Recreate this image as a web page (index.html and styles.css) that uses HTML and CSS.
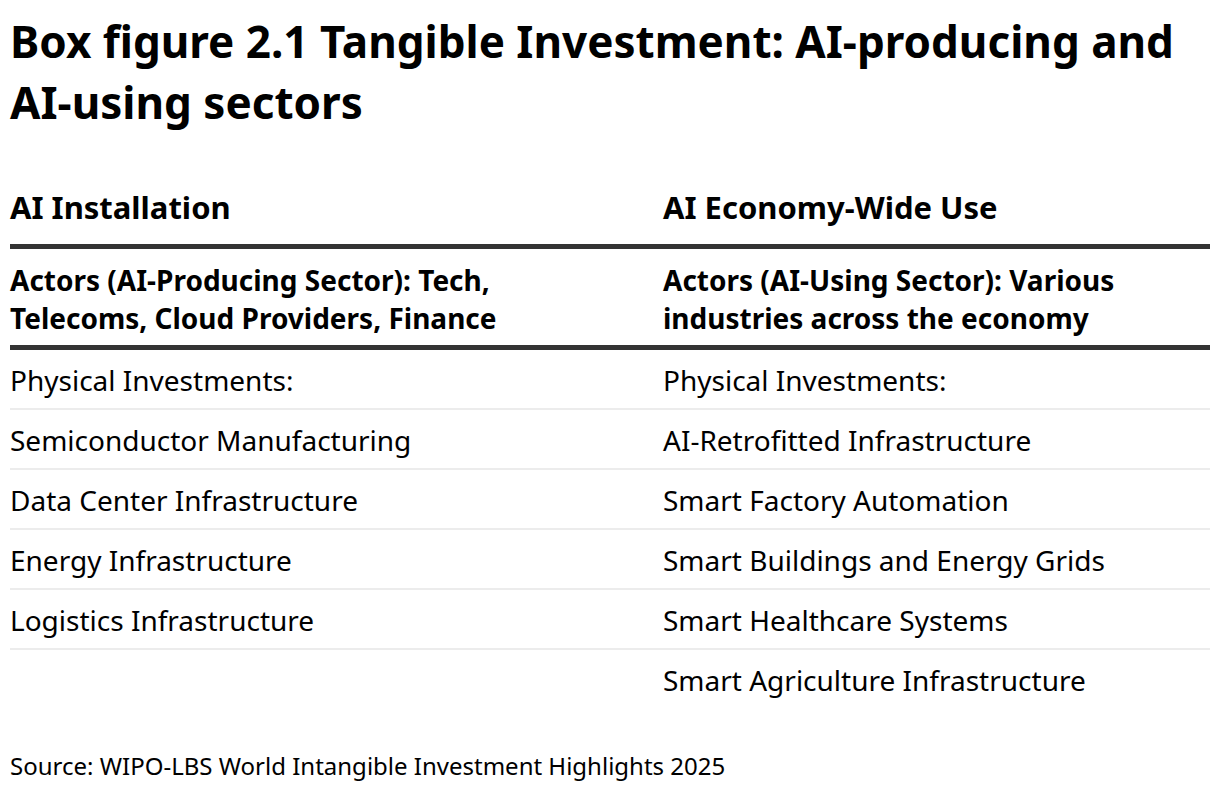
FILE: index.html
```html
<!DOCTYPE html>
<html lang="en">
<head>
<meta charset="utf-8">
<title>Box figure 2.1</title>
<link rel="stylesheet" href="styles.css">
</head>
<body>
<h1 class="title">Box figure 2.1 Tangible Investment: AI-producing and AI-using sectors</h1>
<div class="table">
  <div class="row head">
    <div class="cell">AI Installation</div>
    <div class="cell">AI Economy-Wide Use</div>
  </div>
  <div class="row actors">
    <div class="cell">Actors (AI-Producing Sector): Tech, Telecoms, Cloud Providers, Finance</div>
    <div class="cell">Actors (AI-Using Sector): Various industries across the economy</div>
  </div>
  <div class="row body">
    <div class="cell">Physical Investments:</div>
    <div class="cell">Physical Investments:</div>
  </div>
  <div class="row body">
    <div class="cell">Semiconductor Manufacturing</div>
    <div class="cell">AI-Retrofitted Infrastructure</div>
  </div>
  <div class="row body">
    <div class="cell">Data Center Infrastructure</div>
    <div class="cell">Smart Factory Automation</div>
  </div>
  <div class="row body">
    <div class="cell">Energy Infrastructure</div>
    <div class="cell">Smart Buildings and Energy Grids</div>
  </div>
  <div class="row body">
    <div class="cell">Logistics Infrastructure</div>
    <div class="cell">Smart Healthcare Systems</div>
  </div>
  <div class="row body last">
    <div class="cell"></div>
    <div class="cell">Smart Agriculture Infrastructure</div>
  </div>
</div>
<p class="source">Source: WIPO-LBS World Intangible Investment Highlights 2025</p>
</body>
</html>
```
FILE: styles.css
```css
html, body {
  margin: 0;
  padding: 0;
  background: #fff;
}
body {
  padding: 0 10px;
  font-family: "Noto Sans", "Open Sans", sans-serif;
  color: #000;
}
.title {
  margin: 11px 0 0;
  width: 1200px;
  font-size: 44px;
  line-height: 61px;
  font-weight: 700;
}
.table {
  margin-top: 55px;
  width: 1200px;
}
.row {
  display: grid;
  grid-template-columns: 653px 1fr;
}
.cell {
  font-size: 28px;
  line-height: 38px;
}
.head {
  padding-bottom: 18px;
  border-bottom: 5px solid #333;
}
.head .cell {
  font-size: 31px;
  font-weight: 700;
}
.actors {
  padding: 12px 0 8px;
  border-bottom: 5px solid #333;
}
.actors .cell {
  font-weight: 700;
  padding-right: 40px;
}
.body {
  padding: 11px 0 9px;
  border-bottom: 2px solid #ececec;
}
.body.last {
  border-bottom: none;
}
.source {
  margin: 41px 0 0;
  font-size: 24px;
  line-height: 34px;
}
```
